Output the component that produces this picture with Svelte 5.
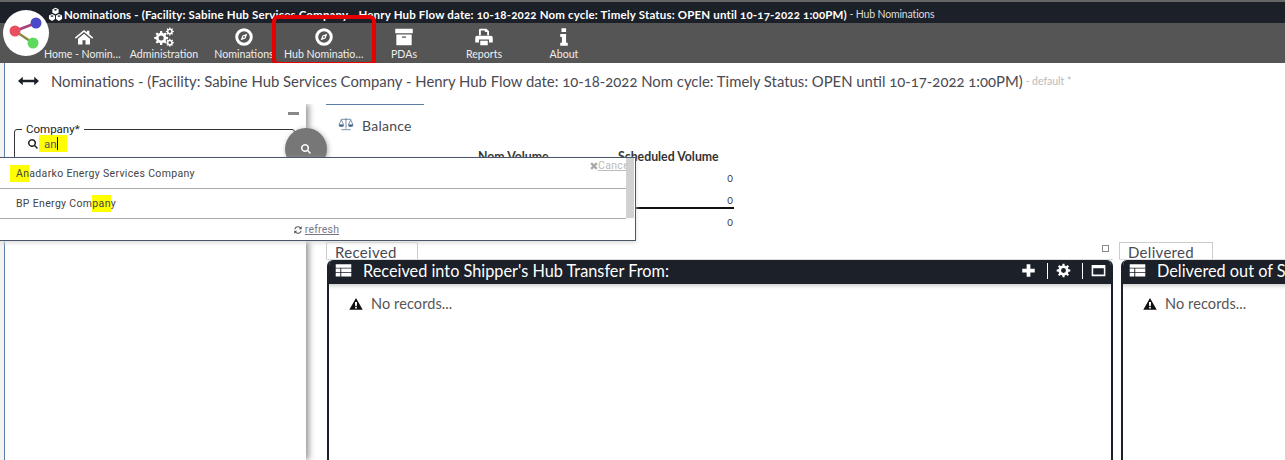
<script lang="ts">
  // teeth around a ring, hole in the middle
  function gear(cx: number, cy: number, r: number, n: number): string {
    const pts: string[] = [];
    const inner = r * 0.74;
    for (let i = 0; i < n; i++) {
      const a = (i / n) * Math.PI * 2;
      const w = Math.PI / n;
      const seq: [number, number][] = [
        [inner, a - w * 0.62],
        [r, a - w * 0.36],
        [r, a + w * 0.36],
        [inner, a + w * 0.62]
      ];
      for (const [rad, t] of seq) {
        pts.push(`${(cx + rad * Math.cos(t)).toFixed(2)} ${(cy + rad * Math.sin(t)).toFixed(2)}`);
      }
    }
    const h = r * 0.36;
    return `M${pts.join('L')}Z M${cx - h} ${cy}a${h} ${h} 0 1 0 ${h * 2} 0a${h} ${h} 0 1 0 ${-h * 2} 0Z`;
  }

  const icons: Record<string, string> = {
    home: 'M12 3.5 15.4 6.3V4.5h3v4.3L23 12.6l-1.2 1.4L12 6 2.2 14 1 12.6Z M4.8 14.2 12 8.2l7.2 6V21h-5.4v-5.2h-3.6V21H4.8Z',
    cogs: gear(8.6, 13.2, 8.4, 8) + ' ' + gear(19, 5.4, 4.8, 8) + ' ' + gear(19, 18.8, 4.8, 8),
    compass:
      'M12 1.5a10.5 10.5 0 1 0 0 21a10.5 10.5 0 0 0 0-21Z M12 5a7 7 0 1 1 0 14a7 7 0 0 1 0-14Z M16 8l-2.2 5.8L8 16l2.2-5.8Z M12 10.9a1.1 1.1 0 1 0 0 2.2a1.1 1.1 0 0 0 0-2.2Z',
    archive: 'M1.5 2h21v5.5h-21Z M2.8 9h18.4v13H2.8Z M9.5 11.5h5V13h-5Z',
    print:
      'M6 10V3.5A1.5 1.5 0 0 1 7.5 2H15l3 3v5h-2.2V6H13V4.2H8.2V10Z M4 10.5h16a2.5 2.5 0 0 1 2.5 2.5v5.5H18V15H6v3.5H1.5V13A2.5 2.5 0 0 1 4 10.5Z M7.5 16.5h9V22h-9Z',
    info: 'M9 1.5h5.5V6H9Z M7.5 8.5h7V18.8h2V22.5h-9v-3.7h2V12h-2Z',
    table: 'M1 3h22v5H1Z M1 9.3h6.5v5H1Z M8.8 9.3h14.2v5H8.8Z M1 15.6h6.5v5H1Z M8.8 15.6h14.2v5H8.8Z',
    plus: 'M9 2h6v7h7v6h-7v7H9v-7H2V9h7Z',
    cog: gear(12, 12, 11, 8),
    win: 'M1 3h22v18H1Z M3.5 8.5V18.5h17V8.5Z',
    warn: 'M12 1.5 23.5 22H.5Z M10.2 8.5l.4 7.5h2.8l.4-7.5Z M10.5 17.3v2.6h3v-2.6Z',
    search:
      'M10 2a8 8 0 1 0 4.7 14.5l5.3 5.3 2-2-5.3-5.3A8 8 0 0 0 10 2Z M10 5a5 5 0 1 1 0 10a5 5 0 0 1 0-10Z',
    refresh:
      'M12 3a9 9 0 0 1 6.4 2.6L21 3v7h-7l2.7-2.7A6.6 6.6 0 0 0 5.7 10H3.2A9 9 0 0 1 12 3Z M3 21v-7h7l-2.7 2.7A6.6 6.6 0 0 0 18.3 14h2.5A9 9 0 0 1 5.6 18.4Z',
    times: 'M6 1 12 7 18 1 23 6 17 12 23 18 18 23 12 17 6 23 1 18 7 12 1 6Z',
    cubes:
      'M12 1 17 3.6V9l-5 2.6L7 9V3.6Z M12 3 9 4.4 12 5.8 15 4.4Z M6.5 11 11.2 13.4V19L6.5 22.4 1.5 19V13.4Z M6.5 13 3.6 14.4 6.5 15.9 9.2 14.4Z M17.5 11 22.5 13.4V19L17.5 22.4 12.8 19V13.4Z M17.5 13 14.8 14.4 17.5 15.9 20.4 14.4Z'
  };

  const navItems = [
    { label: 'Home - Nominations', icon: 'home' },
    { label: 'Administration', icon: 'cogs' },
    { label: 'Nominations', icon: 'compass' },
    { label: 'Hub Nominations', icon: 'compass', marked: true },
    { label: 'PDAs', icon: 'archive' },
    { label: 'Reports', icon: 'print' },
    { label: 'About', icon: 'info' }
  ];

  const title =
    'Nominations - (Facility: Sabine Hub Services Company - Henry Hub Flow date: 10-18-2022 Nom cycle: Timely Status: OPEN until 10-17-2022 1:00PM)';

  const balanceRows = ['0', '0', '0'];

  const panels = [
    { tab: 'Received', heading: "Received into Shipper's Hub Transfer From:", tools: true },
    { tab: 'Delivered', heading: "Delivered out of Shipper's Hub Transfer To:", tools: false }
  ];
</script>

{#snippet icon(name, cls)}
  <svg class="icon {cls}" viewBox="0 0 24 24" aria-hidden="true"><path fill-rule="evenodd" d={icons[name]} /></svg>
{/snippet}

<div class="app">
  <div class="titlebar">
    {@render icon('cubes', 'title-icon')}
    <span class="title-main">{title}</span>
    <span class="title-sub">&nbsp;- Hub Nominations</span>
  </div>

  <nav class="toolbar">
    {#each navItems as item}
      <div class="nav-item">
        {@render icon(item.icon, 'nav-icon')}
        <span class="nav-label">{item.label}</span>
        {#if item.marked}<span class="marker"></span>{/if}
      </div>
    {/each}
  </nav>

  <div class="logo">
    <svg viewBox="0 0 46 46" aria-hidden="true">
      <path d="M12 21 33 13" stroke="#a8407a" stroke-width="2.5" />
      <path d="M12 21 30 33" stroke="#8a8a40" stroke-width="2.5" />
      <circle cx="12" cy="21" r="5.5" fill="#e8505f" />
      <circle cx="33" cy="13" r="5.5" fill="#4a4ac8" />
      <circle cx="30" cy="33" r="5.5" fill="#5fd860" />
    </svg>
  </div>

  <div class="page">
    <header class="page-head">
      <svg class="arrows" viewBox="0 0 22 10" aria-hidden="true">
        <path d="M0 5 5 .5V3.8H17V.5L22 5 17 9.5V6.2H5V9.5Z" />
      </svg>
      <span class="page-title">{title}</span>
      <span class="page-note">&nbsp;- default *</span>
    </header>

    <div class="body">
      <aside class="sidebar">
        <span class="collapse"></span>
        <fieldset class="company">
          <legend>Company*</legend>
          <div class="company-input">
            {@render icon('search', 'input-icon')}
            <span class="typed">an<span class="caret"></span></span>
          </div>
        </fieldset>
        <button class="search-btn" type="button" aria-label="Search">
          {@render icon('search', 'btn-icon')}
        </button>
      </aside>

      <main class="content">
        <div class="balance-tab">
          <svg class="scales" viewBox="0 0 24 20" aria-hidden="true">
            <path d="M12 1v16M5 18.5h14M4 3h16M5 4 1.5 11h7ZM19 4l-3.5 7h7Z" fill="none" stroke="#4a6a8a" stroke-width="1.1" />
            <path d="M1 11.5a4 3 0 0 0 8 0ZM15 11.5a4 3 0 0 0 8 0Z" fill="#4a6a8a" />
          </svg>
          <span>Balance</span>
        </div>

        <div class="balance-table">
          <span class="bal-head">Nom Volume</span>
          <span class="bal-head">Scheduled Volume</span>
          {#each balanceRows as value, i}
            <span class="bal-cell" class:ruled={i === 1}></span>
            <span class="bal-cell num" class:ruled={i === 1}>{value}</span>
          {/each}
        </div>

        <div class="panels">
          {#each panels as panel}
            <section class="panel-col">
              <div class="tab-row">
                <span class="tab">{panel.tab}</span>
                {#if panel.tools}<span class="mini-box"></span>{/if}
              </div>
              <div class="panel">
                <div class="panel-head">
                  {@render icon('table', 'head-icon')}
                  <span class="panel-title">{panel.heading}</span>
                  {#if panel.tools}
                    <div class="panel-tools">
                      {@render icon('plus', 'tool-icon')}
                      <span class="tool-sep"></span>
                      {@render icon('cog', 'tool-icon')}
                      <span class="tool-sep"></span>
                      {@render icon('win', 'tool-icon')}
                    </div>
                  {/if}
                </div>
                <div class="empty">
                  {@render icon('warn', 'warn-icon')}
                  <span>No records...</span>
                </div>
              </div>
            </section>
          {/each}
        </div>
      </main>
    </div>

    <div class="dropdown">
      <div class="options">
        <div class="option"><span class="hit">An</span>adarko Energy Services Company</div>
        <div class="option">BP Energy Com<span class="hit">pan</span>y</div>
        <span class="cancel">{@render icon('times', 'cancel-icon')}<u>Cancel</u></span>
        <span class="scrollbar"></span>
      </div>
      <div class="drop-foot">
        {@render icon('refresh', 'refresh-icon')}<u>refresh</u>
      </div>
    </div>
  </div>
</div>

<style>
  :global(body) {
    margin: 0;
    background: #fff;
  }

  .app {
    position: relative;
    width: 1285px;
    height: 460px;
    overflow: hidden;
    font-family: Lato, 'Open Sans', sans-serif;
    font-variant-numeric: oldstyle-nums;
    color: #333;
  }

  .icon {
    display: block;
    fill: currentColor;
    flex: none;
  }

  .titlebar {
    box-sizing: border-box;
    height: 23px;
    padding: 3px 0 0 48px;
    display: flex;
    align-items: center;
    background: #1b2029;
    border-top: 2px solid #666;
    color: #fff;
    font-size: 11.5px;
    white-space: nowrap;
  }

  .title-icon {
    width: 15px;
    height: 15px;
    margin-right: 1px;
  }

  .title-main {
    font-weight: 700;
    letter-spacing: 0.17px;
  }

  .title-sub {
    font-size: 10.5px;
    color: #ddd;
    letter-spacing: -0.15px;
  }

  .toolbar {
    display: flex;
    height: 40px;
    padding-left: 44px;
    background: #555;
    box-shadow: 0 2px 2px #ddd;
  }

  .nav-item {
    position: relative;
    box-sizing: border-box;
    width: 80px;
    padding-top: 4px;
    display: flex;
    flex-direction: column;
    align-items: center;
    color: #fff;
  }

  .nav-icon {
    width: 20px;
    height: 20px;
  }

  .nav-label {
    width: 80px;
    font-size: 10.6px;
    line-height: 14px;
    text-align: center;
    color: #eee;
    white-space: nowrap;
    overflow: hidden;
    text-overflow: ellipsis;
  }

  .marker {
    position: absolute;
    left: -12px;
    top: -8px;
    box-sizing: border-box;
    width: 104px;
    height: 51px;
    border: 4px solid #e60000;
    border-radius: 6px;
  }

  .logo {
    position: absolute;
    left: 3px;
    top: 10px;
    width: 46px;
    height: 46px;
    border-radius: 50%;
    background: #fff;
  }

  .logo svg {
    display: block;
    filter: blur(0.5px);
  }

  .page {
    position: relative;
    height: 397px;
    padding-left: 4px;
    background: #f4f2f2;
  }

  .page-head {
    box-sizing: border-box;
    height: 41px;
    padding: 0 0 5px 13px;
    display: flex;
    align-items: center;
    background: #fff;
    border-left: 1px solid #5a80a8;
    white-space: nowrap;
  }

  .arrows {
    width: 21px;
    height: 10px;
    margin-right: 12px;
    fill: #1b2029;
  }

  .page-title {
    font-size: 14.87px;
    color: #4a4a52;
  }

  .page-note {
    font-size: 10.5px;
    color: #bbb;
  }

  .body {
    display: flex;
    height: 356px;
    background: #fff;
    border-left: 1px solid #5a80a8;
  }

  .sidebar {
    position: relative;
    box-sizing: border-box;
    width: 301px;
    flex: none;
    background: #fff;
    box-shadow: 3px 0 6px #999;
    clip-path: inset(0 -30px 0 0);
  }

  .collapse {
    position: absolute;
    right: 7px;
    top: 8px;
    width: 11px;
    height: 3px;
    background: #888;
  }

  .company {
    position: absolute;
    left: 9px;
    top: 19px;
    box-sizing: border-box;
    width: 281px;
    height: 60px;
    margin: 0;
    padding: 0 0 0 12px;
    border: 1px solid #333;
    border-radius: 3px 3px 0 0;
    font-family: Roboto, sans-serif;
  }

  .company legend {
    padding: 0 4px;
    margin-left: -5px;
    font-size: 11.5px;
    line-height: 13px;
    color: #222;
  }

  .company-input {
    display: flex;
    align-items: center;
    height: 17px;
    margin-top: -1px;
    font-size: 11.5px;
  }

  .input-icon {
    width: 12px;
    height: 12px;
    color: #222;
  }

  .typed {
    display: flex;
    align-items: center;
    box-sizing: border-box;
    width: 28px;
    height: 17px;
    padding-left: 5px;
    background: #ff0;
    color: #555;
  }

  .caret {
    width: 1px;
    height: 13px;
    background: #111;
  }

  .search-btn {
    position: absolute;
    left: 280px;
    top: 24px;
    width: 42px;
    height: 42px;
    padding: 0;
    display: flex;
    align-items: center;
    justify-content: center;
    border: 0;
    border-radius: 50%;
    background: #777;
    color: #fff;
    box-shadow: 1px 1px 5px #aaa;
  }

  .btn-icon {
    width: 12px;
    height: 12px;
    margin-bottom: 1px;
  }

  .content {
    flex: 1;
    min-width: 0;
    padding-left: 20px;
  }

  .balance-tab {
    box-sizing: border-box;
    width: 98px;
    height: 40px;
    padding: 2px 0 0 12px;
    display: flex;
    align-items: center;
    gap: 8px;
    border-top: 1px solid #5a80a8;
    font-size: 14px;
    color: #4a4a52;
    letter-spacing: 0.25px;
    white-space: nowrap;
  }

  .scales {
    width: 16px;
    height: 14px;
    margin-bottom: 3px;
  }

  .balance-table {
    display: grid;
    grid-template-columns: 140px 116px;
    grid-auto-rows: 22px;
    margin: 2px 0 8px 152px;
    width: 256px;
    font-size: 12.3px;
  }

  .bal-head {
    font-weight: 700;
    color: #333;
    line-height: 22px;
    white-space: nowrap;
  }

  .bal-cell {
    box-sizing: border-box;
    line-height: 20px;
    font-size: 10.5px;
    color: #444;
  }

  .num {
    text-align: right;
    padding-right: 1px;
  }

  .ruled {
    height: 19px;
    border-bottom: 2px solid #111;
  }

  .panels {
    display: flex;
    gap: 6px;
    height: 218px;
  }

  .panel-col {
    flex: none;
    width: 787px;
    display: flex;
    flex-direction: column;
  }

  .panel-col + .panel-col {
    width: 400px;
  }

  .tab-row {
    display: flex;
    align-items: flex-start;
    justify-content: space-between;
    height: 17px;
    border-bottom: 1px solid #ddd;
  }

  .tab {
    box-sizing: border-box;
    width: 92px;
    height: 17px;
    padding-left: 8px;
    border: 1px solid #ccc;
    border-bottom: 0;
    font-size: 15px;
    line-height: 18px;
    color: #4a4a52;
    letter-spacing: 0.3px;
  }

  .panel-col + .panel-col .tab {
    width: 94px;
  }

  .mini-box {
    width: 5px;
    height: 5px;
    margin: 3px 4px 0 0;
    border: 1px solid #888;
  }

  .panel {
    flex: 1;
    margin-left: 1px;
    border: 1px solid #1b2029;
    border-width: 0 2px;
    border-radius: 6px 6px 0 0;
    overflow: hidden;
  }

  .panel-col + .panel-col .panel {
    margin-left: 2px;
  }

  .panel-head {
    box-sizing: border-box;
    height: 24px;
    margin: 0 -2px;
    padding: 0 7px 3px 8px;
    display: flex;
    align-items: center;
    background: #1b2029;
    color: #fff;
    white-space: nowrap;
    box-shadow: 0 2px 4px #ccc;
  }

  .head-icon {
    width: 17px;
    height: 17px;
    margin-right: 11px;
  }

  .panel-title {
    font-size: 16.3px;
  }

  .panel-tools {
    margin-left: auto;
    display: flex;
    align-items: center;
    gap: 8px;
  }

  .tool-icon {
    width: 15px;
    height: 15px;
  }

  .tool-sep {
    width: 1px;
    height: 16px;
    margin-left: 3px;
    background: #fff;
  }

  .empty {
    display: flex;
    align-items: center;
    gap: 8px;
    padding: 11px 0 0 20px;
    font-size: 14.5px;
    color: #555;
    letter-spacing: 0.1px;
  }

  .warn-icon {
    width: 14px;
    height: 14px;
    color: #111;
  }

  .dropdown {
    position: absolute;
    left: 0;
    top: 94px;
    box-sizing: border-box;
    width: 636px;
    height: 84px;
    background: #fff;
    border: 1px solid #4a5568;
    border-left: 0;
    font-family: Roboto, sans-serif;
    font-size: 10.5px;
    color: #444;
    letter-spacing: 0.33px;
    box-shadow: 0 2px 4px #ddd;
    z-index: 2;
  }

  .options {
    position: relative;
    padding-right: 9px;
  }

  .option {
    box-sizing: border-box;
    height: 30px;
    padding-left: 16px;
    line-height: 30px;
    border-bottom: 1px solid #aaa;
  }

  .option:first-child {
    height: 31px;
    line-height: 32px;
  }

  .hit {
    display: inline-block;
    height: 17px;
    line-height: 17px;
    background: #ff0;
  }

  .option:first-child .hit {
    padding-left: 6px;
    margin-left: -6px;
  }

  .cancel {
    position: absolute;
    right: 5px;
    top: 2px;
    width: 40px;
    display: flex;
    align-items: center;
    overflow: hidden;
    color: #bbb;
    font-size: 10.5px;
    line-height: 12px;
  }

  .cancel-icon {
    width: 8px;
    height: 8px;
    color: #aaa;
  }

  .scrollbar {
    position: absolute;
    right: 1px;
    top: 0;
    width: 8px;
    height: 60px;
    background: #ccc;
    opacity: 0.9;
  }

  .drop-foot {
    display: flex;
    align-items: center;
    justify-content: center;
    gap: 2px;
    height: 21px;
    color: #778;
    font-size: 10.5px;
    letter-spacing: 0.2px;
    padding-right: 3px;
  }

  .refresh-icon {
    width: 10px;
    height: 10px;
    color: #555;
  }
</style>
